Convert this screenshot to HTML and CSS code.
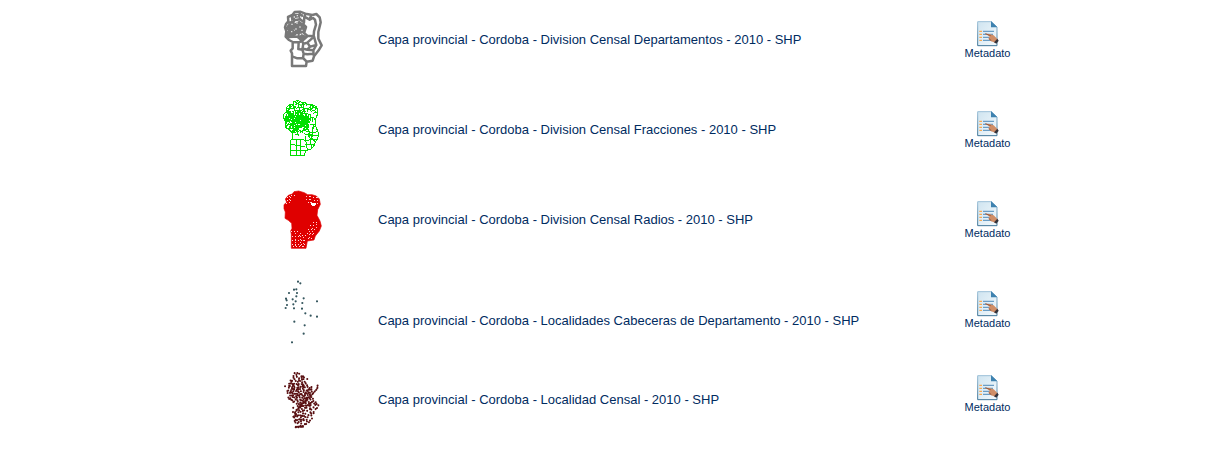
FILE: index.html
```html
<!DOCTYPE html>
<html lang="es">
<head>
<meta charset="utf-8">
<title>Capas provinciales - Cordoba</title>
<link rel="stylesheet" href="styles.css">
</head>
<body>
<svg class="defs" width="0" height="0" aria-hidden="true">
  <defs>
    <linearGradient id="paper" x1="0" y1="0" x2="1" y2="1"><stop offset="0" stop-color="#cfe4f0"/><stop offset="1" stop-color="#f3f9fd"/></linearGradient>
    <linearGradient id="edge" x1="0" y1="0" x2="0" y2="1"><stop offset="0" stop-color="#9cc0d8"/><stop offset="1" stop-color="#3f7597"/></linearGradient>
    <symbol id="meta" viewBox="0 0 90 96">
      <path d="M17 17H58L75 33V89H17Z" fill="url(#paper)" stroke="url(#edge)" stroke-width="3"/>
      <path d="M57 15V34H76Z" fill="#3e82b0"/>
      <path d="M22 46h8M22 55h8M22 64h8M22 73h8" stroke="#f7a851" stroke-width="4"/>
      <path d="M33 46h33M33 55h30M33 64h33M33 73h33" stroke="#6b9dc4" stroke-width="4"/>
      <path d="M40 53L53 54L65 58L77 70L69 80L56 75L49 68L53 62Z" fill="#d08e67"/>
      <path d="M40 53L56 59M51 68L58 74" stroke="#985b40" stroke-width="3"/>
      <path d="M66 79L76 68L80 74L73 83Z" fill="#34323a"/>
    </symbol>
    <path id="province" d="M48 22L60 20L68 24L83 26L90 32L103 32L115 38L120 48L119 60L113 76L111 90L115 102L122 118L121 127L113 142L107 157L98 166L82 170L80 185H38V151L36 141L43 133L42 116L34 108L23 101L22 82L17 72L18 60L28 52L24 42L34 32L45 30Z"/>
    <clipPath id="inside"><use href="#province"/></clipPath>
  </defs>
</svg>
<main class="layers">
  <div class="layer">
    <svg class="map" viewBox="0 0 150 210">
      <g fill="none" stroke="#787878" stroke-width="7.5" stroke-linejoin="round">
        <path d="M42 186V148L38 140L44 133V114L33 108L23 98L25 82L21 70L24 60L31 52L30 39L43 33L50 24L66 23L82 29L103 33L115 30L125 40L128 55L121 84L121 104L131 124L122 139L108 157L104 170L86 173L84 186Z"/>
        <path d="M45 35L49 49L66 46L65 25M66 46L78 55L79 38L83 28M79 38L95 47L99 35M95 47L105 42L111 47L114 62L108 82L107 97L88 95L78 87L84 69L76 61L78 55M30 56L46 54L49 49M46 54L48 72L33 78L22 70M33 78L29 99L46 98L47 86L60 82L72 86M47 86L33 78M48 72L60 65L76 61M46 98L62 98L61 84M62 98L72 111L88 97M44 115L62 115L72 111M62 115L61 135L73 137L76 119L72 111M76 119L88 116L96 128L88 137L76 134M88 116L108 98L115 123L97 128M115 123L106 139L88 137M106 139L107 155M42 157L58 163L75 162L77 149L88 151L106 149M75 162L86 173M73 137L77 149"/>
      </g>
      <path d="M28 62l14-8 7 12-8 13-15-8zM46 60l18-10 12 9-2 14-28 4zM26 82l22-5 9 17-29 5zM50 72l30-10 2 24-30 6zM57 102l14-12 17 7-16 18zM38 36l12-7 24 1 2 8-24 4-12 12z" fill="#787878"/>
      <path d="M47 39h4M56 35h4M66 39h4M40 61h4M55 57h4M64 69h4M39 83h4M52 75h4M70 79h4M55 92h4" stroke="#e4e4e4" stroke-width="4"/>
    </svg>
    <a class="title" href="#">Capa provincial - Cordoba - Division Censal Departamentos - 2010 - SHP</a>
    <a class="metadata" href="#"><svg class="doc"><use href="#meta"/></svg><span>Metadato</span></a>
  </div>
  <div class="layer">
    <svg class="map" viewBox="0 0 150 210">
      <g fill="none" stroke="#00df00" stroke-width="3" shape-rendering="crispEdges">
        <use href="#province"/>
        <g clip-path="url(#inside)"><path class="mesh"/></g>
        <path d="M40 137H79M38 151L80 158M40 170H82M54 137V184M67 136V184M81 126L88 168M88 122L119 126M92 104L101 164M78 140L119 135M80 151L109 153M105 99L101 132L113 144M84 113L109 116L121 112"/>
      </g>
    </svg>
    <a class="title" href="#">Capa provincial - Cordoba - Division Censal Fracciones - 2010 - SHP</a>
    <a class="metadata" href="#"><svg class="doc"><use href="#meta"/></svg><span>Metadato</span></a>
  </div>
  <div class="layer">
    <svg class="map" viewBox="0 0 150 210">
      <path d="M40 193V150L38 141L42 133L41 118L31 109L21 103L22 84L18 74L18 62L26 55L22 45L31 34L43 30L48 23L62 21L79 26L89 32L102 32L115 36L124 45L127 61L119 77L117 94L126 111L130 126L124 141L112 156L108 168L88 171L84 193Z" fill="#df0000" stroke="#df0000" stroke-width="2"/>
      <g shape-rendering="crispEdges">
        <path d="M100 57h15v6h-3v3h-9v-3h-3Z" fill="#fff"/>
        <path d="M28 41h12M26 50h15M24 59h6M40 33h18M84 37h15M84 46h15M105 40h12M108 49h15M90 54h12M39 143h25M42 158h24M64 153h21M86 147h24M97 125h18M91 136h24M43 169h40M43 180h39M46 187h35M105 115h12M91 162h18" stroke="#ffdcdc" stroke-width="3" stroke-dasharray="3 6"/>
        <path d="M33 36v20M84 36v18M96 36v20M117 40v20M51 147v42M66 147v43M76 160v30M93 142v25M104 132v25M116 120v17" stroke="#ffc4c4" stroke-width="3" stroke-dasharray="3 6"/>
      </g>
    </svg>
    <a class="title" href="#">Capa provincial - Cordoba - Division Censal Radios - 2010 - SHP</a>
    <a class="metadata" href="#"><svg class="doc"><use href="#meta"/></svg><span>Metadato</span></a>
  </div>
  <div class="layer layer-towns">
    <svg class="map" viewBox="0 0 150 210">
      <path d="M60 17h0M67 22h0M48 41h0M55 40h0M33 51h0M57 51h0M55 61h0M24 68h0M26 73h0M44 70h0M77 67h0M53 76h0M117 76h0M73 81h0M27 87h0M46 85h0M23 96h0M48 97h0M72 98h0M82 112h0M98 119h0M117 122h0M49 137h0M80 148h0M77 173h0M42 199h0" fill="none" stroke="#36575f" stroke-width="6.6" stroke-linecap="round"/>
    </svg>
    <a class="title" href="#">Capa provincial - Cordoba - Localidades Cabeceras de Departamento - 2010 - SHP</a>
    <a class="metadata" href="#"><svg class="doc"><use href="#meta"/></svg><span>Metadato</span></a>
  </div>
  <div class="layer layer-places">
    <svg class="map" viewBox="0 0 150 210">
      <path class="places" fill="none" stroke="#591012" stroke-width="6.2" stroke-linecap="round"/>
      <path d="M105 82L118 68L119 55M66 117L105 83M61 128L75 112M51 139L62 127M75 120L91 117L99 120M46 152L63 147L75 150M50 165L64 160L78 163M53 184L65 181L78 183" fill="none" stroke="#591012" stroke-width="6" stroke-linecap="round" stroke-dasharray="1 6"/>
    </svg>
    <a class="title" href="#">Capa provincial - Cordoba - Localidad Censal - 2010 - SHP</a>
    <a class="metadata" href="#"><svg class="doc"><use href="#meta"/></svg><span>Metadato</span></a>
  </div>
</main>
<script src="maps.js"></script>
</body>
</html>
```
FILE: styles.css
```css
body { margin: 0; background: #fff; font-family: "Liberation Sans", Arial, sans-serif; }
.defs { position: absolute; }
.layers { width: 740px; padding: 4px 0 0 278px; }
.layer { display: grid; grid-template-columns: 100px 579px 60px; align-items: start; height: 90px; }
.map { display: block; width: 50px; height: 70px; }
.title { padding-top: 28px; font-size: 13px; line-height: 15px; white-space: nowrap; }
.title, .metadata { color: #002b5f; text-decoration: none; }
.metadata { display: flex; flex-direction: column; align-items: center; padding-top: 12px; font-size: 11px; line-height: 13px; }
.metadata span { margin: -1px 0 0 1px; }
.doc { display: block; width: 30px; height: 32px; }
.layer-towns .map, .layer-places .map { margin-top: 2px; }
.layer-towns .title { padding-top: 39px; }
.layer-places .metadata { padding-top: 6px; }
```
FILE: maps.js
```js
let seed = 41;
function random() {
  seed = (seed * 16807) % 2147483647;
  return seed / 2147483647;
}

/* Irregular census boundaries, denser in the northern half. */
let mesh = "";
for (let row = 0; row < 13; row++) {
  for (let col = 0; col < 12; col++) {
    const x = 18 + col * 9 + random() * 7;
    const y = 22 + row * 8 + random() * 6;
    if (row > 8 && random() < 0.5) continue;
    if (x > 90 && random() < 0.6) continue;
    const w = 6 + random() * 9;
    const h = 5 + random() * 9;
    mesh += `M${x} ${y}l${w} ${random() * 8 - 4}l${random() * 8 - 4} ${h}`;
    if (x < 90 && y > 50 && y < 100) mesh += `l${-w} 3l4 ${-h}`;
  }
}
document.querySelector(".mesh").setAttribute("d", mesh);

/* Left and right limits of the settled area for each latitude. */
const bands = [
  [23, 46, 65, 3], [29, 46, 82, 4], [35, 45, 83, 5], [41, 35, 95, 6],
  [47, 35, 83, 7], [53, 29, 84, 9], [59, 21, 88, 10], [65, 30, 105, 12],
  [71, 30, 105, 13], [77, 27, 104, 13], [83, 28, 101, 12], [89, 33, 103, 12],
  [95, 30, 106, 12], [101, 28, 107, 12], [107, 40, 118, 11],
  [113, 51, 119, 9], [119, 54, 122, 8], [125, 45, 122, 8],
  [131, 50, 116, 7], [137, 42, 116, 7], [143, 42, 114, 6],
  [149, 42, 110, 6], [155, 48, 108, 5], [161, 47, 104, 5],
  [167, 48, 100, 5], [173, 58, 90, 4], [180, 65, 80, 2], [184, 52, 72, 4]
];
let places = "";
for (const [y, left, right, count] of bands) {
  for (let i = 0; i < count; i++) {
    const x = left + (right - left) * (i + random() * 0.9) / count;
    places += `M${x} ${y + random() * 5 - 2.5}h0`;
  }
}
document.querySelector(".places").setAttribute("d", places);
```
